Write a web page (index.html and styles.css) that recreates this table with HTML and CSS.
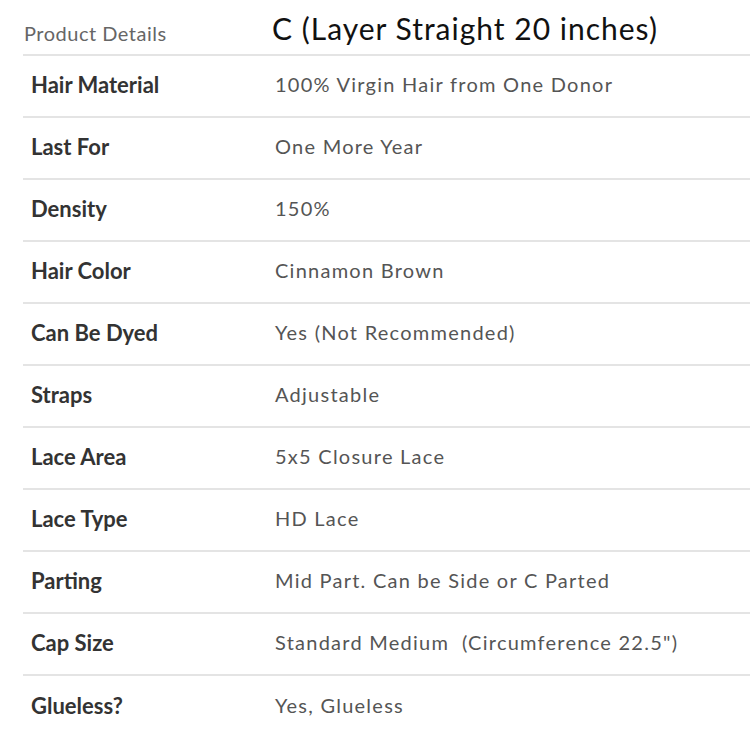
FILE: index.html
```html
<!DOCTYPE html>
<html>
<head>
<meta charset="utf-8">
<link rel="stylesheet" href="styles.css">
</head>
<body>
<div class="specs">
  <div class="head">
    <div class="head-label">Product Details</div>
    <div class="head-title">C (Layer Straight 20 inches)</div>
  </div>
  <div class="row"><div class="label">Hair Material</div><div class="value">100% Virgin Hair from One Donor</div></div>
  <div class="row"><div class="label">Last For</div><div class="value">One More Year</div></div>
  <div class="row"><div class="label">Density</div><div class="value">150%</div></div>
  <div class="row"><div class="label">Hair Color</div><div class="value">Cinnamon Brown</div></div>
  <div class="row"><div class="label">Can Be Dyed</div><div class="value">Yes (Not Recommended)</div></div>
  <div class="row"><div class="label">Straps</div><div class="value">Adjustable</div></div>
  <div class="row"><div class="label">Lace Area</div><div class="value">5x5 Closure Lace</div></div>
  <div class="row"><div class="label">Lace Type</div><div class="value">HD Lace</div></div>
  <div class="row"><div class="label">Parting</div><div class="value">Mid Part. Can be Side or C Parted</div></div>
  <div class="row"><div class="label">Cap Size</div><div class="value">Standard Medium&nbsp; (Circumference 22.5")</div></div>
  <div class="row last"><div class="label">Glueless?</div><div class="value">Yes, Glueless</div></div>
</div>
</body>
</html>
```
FILE: styles.css
```css
html, body {
  margin: 0;
  padding: 0;
  background: #fff;
}
body {
  font-family: Lato, "Open Sans", sans-serif;
}
.specs {
  margin-left: 23px;
  width: 727px;
}
.head {
  display: grid;
  grid-template-columns: 248px 1fr;
  align-items: center;
  height: 56px;
  border-bottom: 2px solid #e4e4e4;
  box-sizing: border-box;
}
.head-label {
  padding-left: 1px;
  padding-top: 12px;
  font-size: 20px;
  letter-spacing: 0.5px;
  color: #666;
}
.head-title {
  padding-left: 1px;
  font-size: 30px;
  letter-spacing: 1px;
  color: #111;
  padding-top: 2px;
}
.row {
  display: grid;
  grid-template-columns: 252px 1fr;
  align-items: center;
  height: 62px;
  border-bottom: 2px solid #e4e4e4;
  box-sizing: border-box;
  padding-bottom: 4px;
}
.row.last {
  border-bottom: none;
}
.label {
  padding-left: 8px;
  font-size: 22px;
  font-weight: 700;
  color: #333;
}
.value {
  font-size: 20px;
  letter-spacing: 1.25px;
  color: #555;
}
```
